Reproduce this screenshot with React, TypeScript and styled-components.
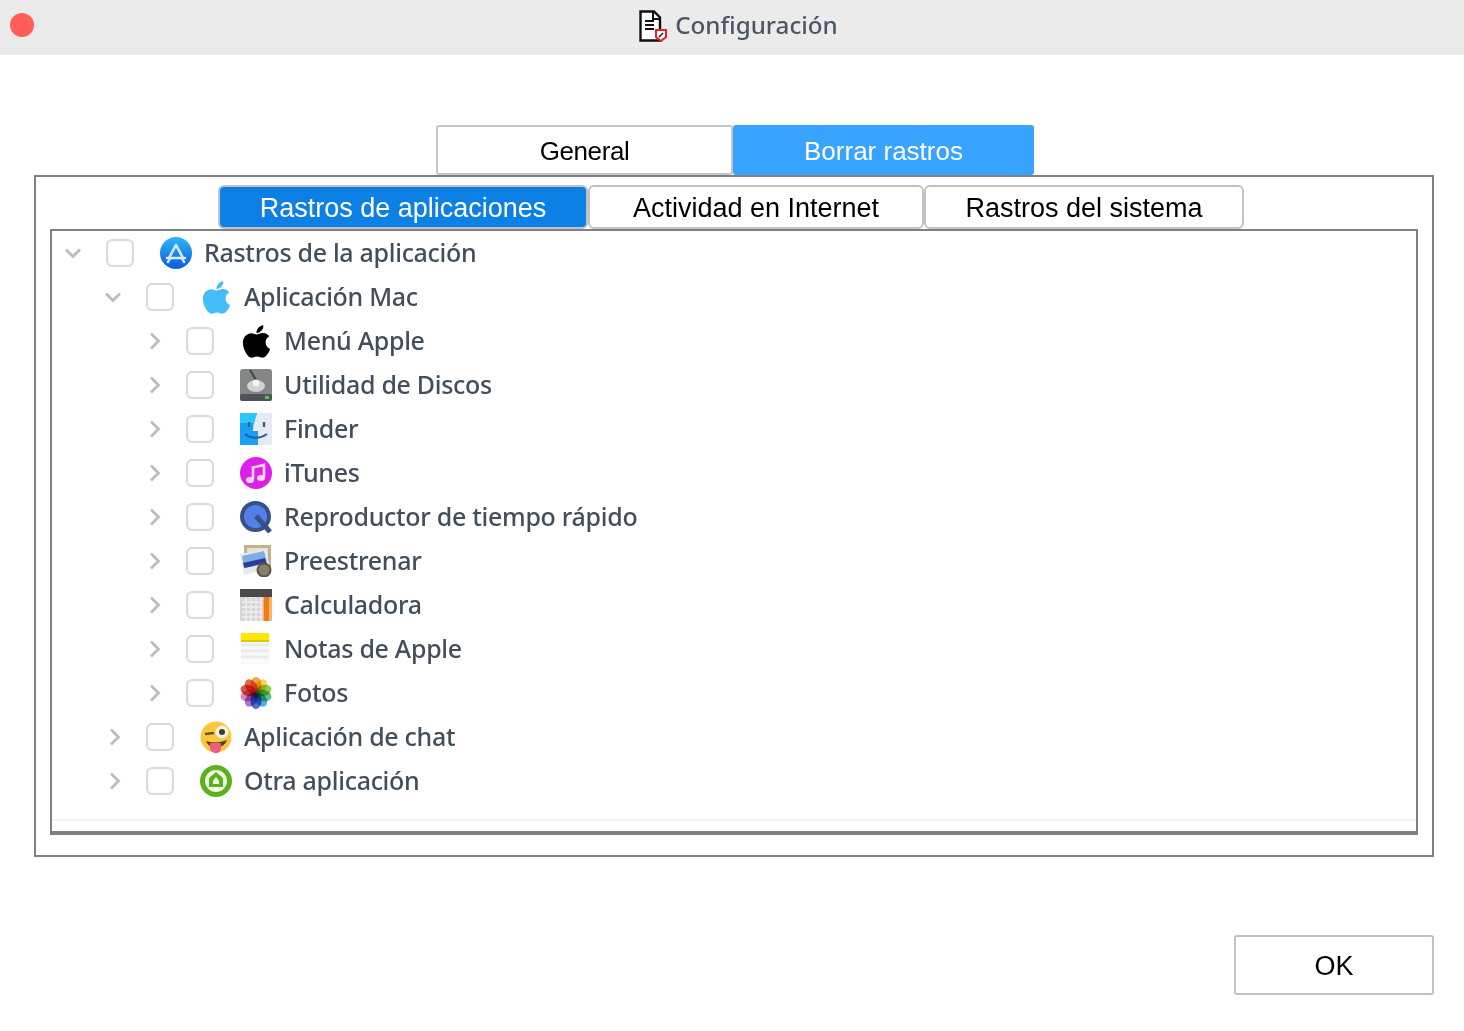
import * as React from 'react'
import styled, { createGlobalStyle } from 'styled-components'
import { FaApple } from 'react-icons/fa'

const GlobalStyle = createGlobalStyle`
    html, body {
        margin: 0;
        padding: 0;
        background: #ffffff;
    }
`

const Page = styled.div`
    width: 1464px;
    height: 1031px;
    display: flex;
    flex-direction: column;
    overflow: hidden;
    background: #ffffff;
`

const TitleBar = styled.header`
    position: relative;
    height: 55px;
    flex: none;
    background: #ebebeb;
    display: flex;
    align-items: center;
    justify-content: center;
    gap: 8px;
    padding: 0 0 4px 13px;
    box-sizing: border-box;
`

const CloseDot = styled.span`
    position: absolute;
    left: 10px;
    top: 13px;
    width: 24px;
    height: 24px;
    border-radius: 50%;
    background: #ff5f57;
`

const TitleText = styled.span`
    font-family: "Noto Sans", sans-serif;
    font-size: 24.2px;
    font-weight: 500;
    color: #4a5764;
    line-height: 30px;
    padding-bottom: 2px;
`

const TopTabs = styled.nav`
    display: flex;
    margin: 70px 0 0 436px;
    height: 50px;
`

const TopTab = styled.div<{ $active?: boolean; $width: number }>`
    width: ${(p) => p.$width}px;
    box-sizing: border-box;
    display: flex;
    align-items: center;
    justify-content: center;
    font-family: "Liberation Sans", sans-serif;
    font-size: 26px;
    letter-spacing: ${(p) => (p.$active ? '0' : '-0.4px')};
    padding-top: 2px;
    border-radius: 3px;
    color: ${(p) => (p.$active ? '#ffffff' : '#000000')};
    background: ${(p) => (p.$active ? '#38a4ff' : '#ffffff')};
    border: 2px solid ${(p) => (p.$active ? '#38a4ff' : '#c4c7c9')};
`

const Frame = styled.section`
    box-sizing: border-box;
    width: 1400px;
    height: 682px;
    margin-left: 34px;
    border: 2px solid #808080;
    padding: 8px 14px 0;
`

const SubTabs = styled.nav`
    display: flex;
    margin-left: 168px;
    height: 44px;
`

const SubTab = styled.div<{ $active?: boolean; $width: number }>`
    width: ${(p) => p.$width}px;
    box-sizing: border-box;
    display: flex;
    align-items: center;
    justify-content: center;
    font-family: "Liberation Sans", sans-serif;
    font-size: 27px;
    padding-top: 3px;
    border-radius: 6px;
    color: ${(p) => (p.$active ? '#ffffff' : '#000000')};
    background: ${(p) => (p.$active ? '#0d80e6' : '#ffffff')};
    border: 2px solid #bfc3c6;
`

const TreePanel = styled.div`
    box-sizing: border-box;
    width: 1368px;
    height: 606px;
    border: 2px solid #808080;
    border-bottom-width: 4px;
    display: flex;
    flex-direction: column;
`

const Rows = styled.div`
    flex: 1;
    border-bottom: 2px solid #f3f3f3;
    margin-bottom: 10px;
`

const Row = styled.div<{ $level: number }>`
    height: 44px;
    display: flex;
    align-items: center;
    padding-left: ${(p) => 8 + p.$level * 40}px;
`

const Toggle = styled.span`
    width: 26px;
    height: 26px;
    flex: none;
    display: flex;
    align-items: center;
    justify-content: center;
    margin-right: 20px;
`

const CheckBox = styled.span`
    width: 28px;
    height: 28px;
    flex: none;
    box-sizing: border-box;
    border: 2px solid #dadada;
    border-radius: 6px;
    background: #ffffff;
    box-shadow: inset 0 0 2px #eeeeee;
    margin-right: 26px;
`

const IconSlot = styled.span`
    width: 32px;
    height: 32px;
    flex: none;
    display: flex;
    align-items: center;
    justify-content: center;
    margin-right: 12px;
`

const Label = styled.span`
    font-family: "Noto Sans", sans-serif;
    font-size: 25px;
    font-weight: 500;
    letter-spacing: -0.3px;
    color: #414e5b;
    white-space: nowrap;
    padding-bottom: 2px;
`

const Footer = styled.footer`
    display: flex;
    justify-content: flex-end;
    padding: 78px 30px 0 0;
`

const OkButton = styled.button`
    width: 200px;
    height: 60px;
    box-sizing: border-box;
    background: #ffffff;
    border: 2px solid #c2c2c2;
    border-radius: 3px;
    font-family: "Liberation Sans", sans-serif;
    font-size: 27px;
    color: #000000;
    padding: 2px 0 0;
`

const Petal = styled.ellipse`
    mix-blend-mode: multiply;
`

const Chevron = ({ open }: { open: boolean }) => (
    <svg width="18" height="18" viewBox="0 0 18 18" fill="none" stroke="#bdbdbd" strokeWidth="2.8">
        {open ? <path d="M2 5.5l7 7 7-7" /> : <path d="M7 1.5l7.5 7.5L7 16.5" />}
    </svg>
)

const DocIcon = () => (
    <svg width="28" height="32" viewBox="0 0 28 32">
        <path d="M1.5 1.5H15l6 6v23H1.5z" fill="#fff" stroke="#111" strokeWidth="2.4" />
        <path d="M14 2v7h7" fill="none" stroke="#111" strokeWidth="2" />
        <path d="M6 11h9M6 15h9M6 19h9" stroke="#111" strokeWidth="2" />
        <path d="M17 20h10v7l-5 4-5-4z" fill="#fff" stroke="#e8202a" strokeWidth="2" />
        <path d="M20 27l4-4" stroke="#222" strokeWidth="1.6" />
    </svg>
)

const AppStoreIcon = () => (
    <svg width="32" height="32" viewBox="0 0 32 32">
        <defs>
            <linearGradient id="store" x1="0" y1="0" x2="0" y2="1">
                <stop offset="0" stopColor="#2cb6f6" />
                <stop offset="1" stopColor="#0a5de0" />
            </linearGradient>
        </defs>
        <circle cx="16" cy="16" r="16" fill="url(#store)" />
        <path d="M16 8l6.5 12M16 8L9.5 20M7 21h18M24 25l-2-4M8 25l2-4" stroke="#d9e6f7" strokeWidth="2.6" strokeLinecap="round" fill="none" />
    </svg>
)

const DiskIcon = () => (
    <svg width="32" height="32" viewBox="0 0 32 32">
        <rect width="32" height="32" rx="3" fill="#858688" />
        <rect y="25" width="32" height="7" rx="2" fill="#4f5357" />
        <ellipse cx="16" cy="17" rx="9" ry="6" fill="#d2d2d2" />
        <path d="M10 1l6 10" stroke="#46494c" strokeWidth="2.4" />
        <circle cx="16" cy="14" r="3.4" fill="#f2f2f2" />
        <rect x="25" y="27" width="4" height="3" fill="#4fc83f" />
    </svg>
)

const FinderIcon = () => (
    <svg width="32" height="32" viewBox="0 0 32 32">
        <rect width="32" height="32" fill="#e6ebf1" />
        <path d="M0 0h17c-2 6-4 12-4 18h5v14H0z" fill="#18a0f4" />
        <path d="M0 0h17l-3 10H0z" fill="#2ec6fa" />
        <path d="M9 9v5M24 9v5" stroke="#3a5f8f" strokeWidth="2.4" />
        <path d="M5 21c6 5 15 5 22 0" stroke="#2a5a9a" strokeWidth="2" fill="none" />
    </svg>
)

const TunesIcon = () => (
    <svg width="32" height="32" viewBox="0 0 32 32">
        <circle cx="16" cy="16" r="16" fill="#dc20e8" />
        <path d="M13 22V10.5l11-2.5V20" stroke="#f8d8fb" strokeWidth="2.6" fill="none" />
        <ellipse cx="10" cy="23" rx="4" ry="3" fill="#f8d8fb" />
        <ellipse cx="21" cy="21" rx="4" ry="3" fill="#f8d8fb" />
    </svg>
)

const QuickTimeIcon = () => (
    <svg width="32" height="32" viewBox="0 0 32 32">
        <circle cx="15.5" cy="15.5" r="13.5" fill="#5080e8" stroke="#3a4f85" strokeWidth="4" />
        <path d="M16 15l14 16" stroke="#3a4f85" strokeWidth="5" />
    </svg>
)

const PreviewIcon = () => (
    <svg width="32" height="32" viewBox="0 0 32 32">
        <rect x="4" y="0" width="27" height="24" fill="#c4b08c" />
        <rect x="7" y="3" width="21" height="17" fill="#e8dfcd" />
        <path d="M0 9l26-5 4 19L4 30z" fill="#e4e9ef" />
        <path d="M2 11l22-5 3 12-23 5z" fill="#7eace6" />
        <path d="M3 18l22-5 1.5 5-22 5z" fill="#2b3f92" />
        <circle cx="24" cy="25" r="6.5" fill="#8a7e6e" stroke="#5e5344" strokeWidth="2" />
    </svg>
)

const CalculatorIcon = () => (
    <svg width="32" height="32" viewBox="0 0 32 32">
        <rect width="32" height="32" fill="#d6d6d6" />
        <rect width="32" height="8" fill="#4a4a4a" />
        <rect x="23" y="8" width="9" height="24" fill="#fbb36c" />
        <path d="M2 13h20M2 18h20M2 23h20M2 28h20M6 8v24M11 8v24M16 8v24M21 8v24" stroke="#efefef" strokeWidth="1.4" />
        <path d="M26.5 8v24" stroke="#f37a15" strokeWidth="5" />
    </svg>
)

const NotesIcon = () => (
    <svg width="32" height="32" viewBox="0 0 32 32">
        <rect x="1" y="0" width="28" height="7" fill="#ffe600" />
        <rect x="1" y="7" width="28" height="2" fill="#e3c700" />
        <rect x="1" y="9" width="28" height="22" fill="#fafafa" />
        <path d="M1 12h28M1 18h28M1 24h28" stroke="#ebebeb" strokeWidth="3" />
    </svg>
)

const PETALS = ['#f09a3c', '#f5d43a', '#8cc63f', '#48bd7a', '#3aa8e0', '#3f5fc8', '#9a6cc8', '#d77ac0', '#d8443a', '#e2562c']

const PhotosIcon = () => (
    <svg width="32" height="32" viewBox="0 0 32 32">
        {PETALS.map((color, i) => (
            <Petal
                key={color}
                cx="16"
                cy="8"
                rx="5.5"
                ry="8"
                fill={color}
                fillOpacity="0.9"
                transform={`rotate(${i * 36} 16 16)`}
            />
        ))}
    </svg>
)

const WinkIcon = () => (
    <svg width="32" height="32" viewBox="0 0 32 32">
        <circle cx="16" cy="16" r="15.5" fill="#fbc63d" />
        <path d="M5 13l9-1" stroke="#6c5320" strokeWidth="2.4" />
        <circle cx="22" cy="11" r="6.5" fill="#f4f1e6" />
        <circle cx="22" cy="11" r="3" fill="#3b3b3b" />
        <path d="M6 20c6 2 14 2 21-1-1 3-3 5-5 6H10c-2-1-3-3-4-5z" fill="#5b3d1a" />
        <path d="M10 22h11v5c0 3-2 5-5 5s-6-2-6-5z" fill="#ee5c85" />
    </svg>
)

const OtherIcon = () => (
    <svg width="32" height="32" viewBox="0 0 32 32">
        <circle cx="16" cy="16" r="16" fill="#5cb01c" />
        <circle cx="16" cy="16" r="11" fill="#f0f7e8" />
        <path d="M16 7l7 6v9H9v-9z" fill="#5cb01c" />
        <path d="M16 12l3 4v3h-6v-3z" fill="#f0f7e8" />
    </svg>
)

const BlueApple = styled(FaApple)`
    color: #45bdfb;
    font-size: 37px;
    flex: none;
`

const BlackApple = styled(FaApple)`
    color: #000000;
    font-size: 37px;
    flex: none;
`

const ROWS: { level: number; open?: boolean; label: string; icon: React.ReactElement }[] = [
    { level: 0, open: true, label: 'Rastros de la aplicación', icon: <AppStoreIcon /> },
    { level: 1, open: true, label: 'Aplicación Mac', icon: <BlueApple /> },
    { level: 2, label: 'Menú Apple', icon: <BlackApple /> },
    { level: 2, label: 'Utilidad de Discos', icon: <DiskIcon /> },
    { level: 2, label: 'Finder', icon: <FinderIcon /> },
    { level: 2, label: 'iTunes', icon: <TunesIcon /> },
    { level: 2, label: 'Reproductor de tiempo rápido', icon: <QuickTimeIcon /> },
    { level: 2, label: 'Preestrenar', icon: <PreviewIcon /> },
    { level: 2, label: 'Calculadora', icon: <CalculatorIcon /> },
    { level: 2, label: 'Notas de Apple', icon: <NotesIcon /> },
    { level: 2, label: 'Fotos', icon: <PhotosIcon /> },
    { level: 1, label: 'Aplicación de chat', icon: <WinkIcon /> },
    { level: 1, label: 'Otra aplicación', icon: <OtherIcon /> },
]

export default function App(): React.ReactElement {
    return (
        <Page>
            <GlobalStyle />
            <TitleBar>
                <CloseDot />
                <DocIcon />
                <TitleText>Configuración</TitleText>
            </TitleBar>
            <TopTabs>
                <TopTab $width={297}>General</TopTab>
                <TopTab $width={301} $active>Borrar rastros</TopTab>
            </TopTabs>
            <Frame>
                <SubTabs>
                    <SubTab $width={370} $active>Rastros de aplicaciones</SubTab>
                    <SubTab $width={336}>Actividad en Internet</SubTab>
                    <SubTab $width={320}>Rastros del sistema</SubTab>
                </SubTabs>
                <TreePanel>
                    <Rows>
                        {ROWS.map((row) => (
                            <Row key={row.label} $level={row.level}>
                                <Toggle><Chevron open={!!row.open} /></Toggle>
                                <CheckBox />
                                <IconSlot>{row.icon}</IconSlot>
                                <Label>{row.label}</Label>
                            </Row>
                        ))}
                    </Rows>
                </TreePanel>
            </Frame>
            <Footer>
                <OkButton>OK</OkButton>
            </Footer>
        </Page>
    )
}
